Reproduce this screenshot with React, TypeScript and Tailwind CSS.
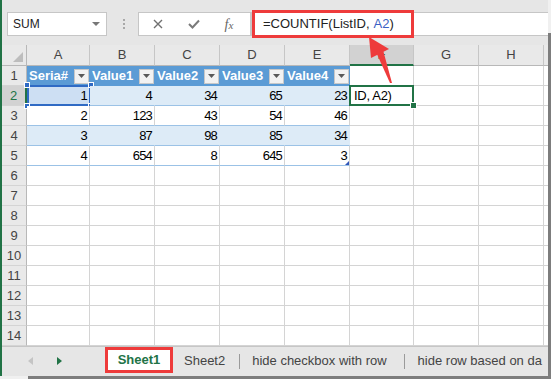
import { ReactNode } from 'react';

interface Col {
    letter: string;
    width: string;
}

const cols: Col[] = [
    { letter: 'A', width: 'w-[63px]' },
    { letter: 'B', width: 'w-[65px]' },
    { letter: 'C', width: 'w-[65px]' },
    { letter: 'D', width: 'w-[65px]' },
    { letter: 'E', width: 'w-[65px]' },
    { letter: 'F', width: 'w-[64px]' },
    { letter: 'G', width: 'w-[65px]' },
    { letter: 'H', width: 'w-[65px]' },
];

const headers = ['Seria#', 'Value1', 'Value2', 'Value3', 'Value4'];

const rows = [
    ['1', '4', '34', '65', '23'],
    ['2', '123', '43', '54', '46'],
    ['3', '87', '98', '85', '34'],
    ['4', '654', '8', '645', '3'],
];

const rowNumbers = Array.from({ length: 14 }, (_, i) => i + 1);

function FilterButton() {
    return (
        <div className="w-[15px] h-[15px] mr-[1px] bg-[#f2f2f2] border border-[#c8c8c8] flex items-center justify-center shrink-0">
            <svg width="7" height="4" viewBox="0 0 7 4">
                <path d="M0 0 L7 0 L3.5 4 Z" fill="#595959" />
            </svg>
        </div>
    );
}

function Handle({ className }: { className: string }) {
    return <div className={`absolute w-[6px] h-[6px] bg-[#2f6ac4] border border-white ${className}`} />;
}

function Cell({ row, col }: { row: number; col: number }) {
    const width = cols[col].width;

    // ligne d'en-tête du tableau
    if (row === 1 && col < 5) {
        return (
            <div className={`${width} h-[20px] shrink-0 bg-[#5b9bd5] flex items-center pl-[2px] text-white font-bold text-[13px]`}>
                <span className="flex-1 whitespace-nowrap overflow-hidden">{headers[col]}</span>
                <FilterButton />
            </div>
        );
    }

    // corps du tableau
    if (row >= 2 && row <= 5 && col < 5) {
        const value = rows[row - 2][col];
        const banded = row % 2 === 0;
        if (row === 2 && col === 0) {
            return (
                <div className={`${width} h-[20px] shrink-0 relative bg-[#cddff3] border-b border-[#9bc2e6] flex items-center justify-end pr-[3px] text-[13px] tracking-[-0.8px] text-black`}>
                    {value}
                    <div className="absolute left-0 top-[-1px] right-[-1px] bottom-[-1px] border-2 border-[#2f6ac4]" />
                    <Handle className="left-[-3px] top-[-4px]" />
                    <Handle className="right-[-4px] top-[-4px]" />
                    <Handle className="left-[-3px] bottom-[-4px]" />
                    <Handle className="right-[-4px] bottom-[-4px]" />
                </div>
            );
        }
        return (
            <div
                className={`${width} h-[20px] shrink-0 relative border-b border-[#9bc2e6] border-r flex items-center justify-end pr-[2px] text-[13px] tracking-[-0.8px] text-black ${
                    banded ? 'bg-[#ddebf7] border-r-[#ddebf7]' : 'bg-white border-r-[#d4d4d4]'
                }`}
            >
                {value}
                {row === 5 && col === 4 && (
                    <svg className="absolute right-[0px] bottom-[0px]" width="4" height="4" viewBox="0 0 4 4">
                        <path d="M4 0 L4 4 L0 4 Z" fill="#2f55b8" />
                    </svg>
                )}
            </div>
        );
    }

    // cellule active F2 (texte en cours de saisie)
    if (row === 2 && col === 5) {
        return (
            <div className={`${width} h-[20px] shrink-0 relative bg-white border-r border-b border-[#d4d4d4] flex items-center pl-[4px] text-[13px] tracking-[-0.3px] text-black whitespace-nowrap`}>
                ID, A2)
                <div className="absolute left-[-1px] top-[-1px] right-[-1px] bottom-[-1px] border-2 border-[#217346]" />
                <div className="absolute right-[-4px] bottom-[-4px] w-[7px] h-[7px] bg-[#217346] border border-white" />
            </div>
        );
    }

    return <div className={`${width} h-[20px] shrink-0 bg-white border-r border-b border-[#d4d4d4]`} />;
}

function GridRow({ row }: { row: number }) {
    const selected = row === 2;
    return (
        <div className="flex h-[20px]">
            <div
                className={`w-[25px] h-[20px] shrink-0 flex items-center justify-center text-[13px] border-b border-[#d4d4d4] ${
                    selected ? 'bg-[#d2d2d2] text-[#217346] border-r-2 border-r-[#217346]' : 'bg-[#e9e9e9] text-[#444] border-r border-r-[#b8b8b8]'
                }`}
            >
                {row}
            </div>
            {cols.map((_, i) => (
                <Cell key={i} row={row} col={i} />
            ))}
            <div className="flex-1 h-[20px] bg-white border-b border-[#d4d4d4]" />
        </div>
    );
}

function FormulaBar() {
    return (
        <div className="h-[45px] pt-[12px] flex items-start">
            <div className="ml-[5px] w-[100px] h-[24px] bg-white border border-[#c6c6c6] flex items-center pl-[5px] pr-[6px] text-[12px] text-[#222]">
                <span className="flex-1">SUM</span>
                <svg width="8" height="4" viewBox="0 0 8 4">
                    <path d="M0 0 L8 0 L4 4 Z" fill="#777" />
                </svg>
            </div>
            <div className="ml-[15px] h-[24px] w-[3px] flex flex-col items-center justify-center gap-[2px]">
                <div className="w-[2px] h-[2px] bg-[#a8a8a8]" />
                <div className="w-[2px] h-[2px] bg-[#a8a8a8]" />
                <div className="w-[2px] h-[2px] bg-[#a8a8a8]" />
            </div>
            <div className="ml-[13px] w-[113px] h-[24px] bg-white border border-[#c6c6c6] flex items-center">
                <div className="w-[38px] flex justify-center">
                    <svg width="10" height="10" viewBox="0 0 10 10">
                        <path d="M1 1 L9 9 M9 1 L1 9" stroke="#707070" strokeWidth="1.4" />
                    </svg>
                </div>
                <div className="w-[34px] flex justify-center">
                    <svg width="12" height="10" viewBox="0 0 12 10">
                        <path d="M1 5 L4.5 8.5 L11 1.5" stroke="#7a7a7a" strokeWidth="2" fill="none" />
                    </svg>
                </div>
                <div className="w-[36px] flex justify-center font-['Liberation_Serif',serif] italic text-[14px] text-[#666]">
                    f<span className="text-[11px] mt-[3px]">x</span>
                </div>
            </div>
            <div className="flex-1 h-[24px] bg-white border-y border-l border-[#c6c6c6] flex items-center pl-[11px] text-[13px] text-[#222] whitespace-nowrap">
                =COUNTIF(ListID, <span className="text-[#3b5fc4] ml-[4px]">A2</span>)
            </div>
        </div>
    );
}

function ColumnHeaders() {
    return (
        <div className="flex h-[21px]">
            <div className="w-[25px] h-[21px] shrink-0 bg-[#e9e9e9] border-r border-b border-[#b8b8b8] flex items-end justify-end p-[3px]">
                <svg width="10" height="10" viewBox="0 0 10 10">
                    <path d="M10 0 L10 10 L0 10 Z" fill="#bdbdbd" />
                </svg>
            </div>
            {cols.map((c, i) => (
                <div
                    key={c.letter}
                    className={`${c.width} h-[21px] shrink-0 flex items-center justify-center text-[13px] border-r border-r-[#c6c6c6] ${
                        i === 5 ? 'bg-[#d2d2d2] text-[#217346] border-b-2 border-b-[#217346]' : 'bg-[#e9e9e9] text-[#444] border-b border-b-[#b8b8b8]'
                    }`}
                >
                    {c.letter}
                </div>
            ))}
            <div className="flex-1 h-[21px] bg-[#e9e9e9] border-b border-[#b8b8b8]" />
        </div>
    );
}

function TabBar() {
    return (
        <div className="h-[30px] bg-[#e6e6e6] border-t border-[#c6c6c6] flex items-start text-[13px] text-[#444] whitespace-nowrap overflow-hidden">
            <div className="h-[28px] flex items-center">
                <svg className="ml-[26px]" width="5" height="8" viewBox="0 0 5 8">
                    <path d="M5 0 L5 8 L0 4 Z" fill="#c4c4c4" />
                </svg>
                <svg className="ml-[24px]" width="5" height="8" viewBox="0 0 5 8">
                    <path d="M0 0 L0 8 L5 4 Z" fill="#217346" />
                </svg>
            </div>
            <div className="ml-[43px] w-[68px] h-[26px] bg-white border-[3px] border-[#ee3b3b] flex items-center justify-center font-bold text-[#217346]">
                Sheet1
            </div>
            <div className="h-[28px] flex items-center">
                <span className="ml-[11px]">Sheet2</span>
                <div className="ml-[14px] w-[1px] h-[15px] bg-[#9a9a9a]" />
                <span className="ml-[12px]">hide checkbox with row</span>
                <div className="ml-[17px] w-[1px] h-[15px] bg-[#9a9a9a]" />
                <span className="ml-[13px]">hide row based on da</span>
            </div>
        </div>
    );
}

function Shell({ children }: { children: ReactNode }) {
    return (
        <div className="flex h-[376px]">
            <div className="w-[548px] border-l-2 border-[#217346] bg-[#e6e6e6] flex flex-col overflow-hidden">{children}</div>
            <div className="w-[3px] flex flex-col">
                <div className="h-[33px]" />
                <div className="flex-1 bg-[#7d7d7d]" />
            </div>
        </div>
    );
}

export default function App() {
    return (
        <div className="relative w-[551px] h-[379px] bg-[#f0f0f0] overflow-hidden font-['Liberation_Sans',Arial,sans-serif]">
            <Shell>
                <FormulaBar />
                <ColumnHeaders />
                <div className="flex flex-col">
                    {rowNumbers.map(r => (
                        <GridRow key={r} row={r} />
                    ))}
                </div>
                <TabBar />
            </Shell>
            <div className="flex h-[3px]">
                <div className="w-[28px]" />
                <div className="flex-1 bg-[#7d7d7d]" />
            </div>

            {/* annotations rouges */}
            <div className="absolute left-[252px] top-[10px] w-[162px] h-[28px] border-[3px] border-[#ee3b3b] pointer-events-none" />
            <svg className="absolute left-0 top-0 pointer-events-none" width="551" height="379" viewBox="0 0 551 379">
                <path d="M369 37 L371 58 L389 49 Z" fill="#ee3b3b" />
                <path d="M376 52 L383 50 L392 83 L390 83 Z" fill="#ee3b3b" />
            </svg>
        </div>
    );
}
